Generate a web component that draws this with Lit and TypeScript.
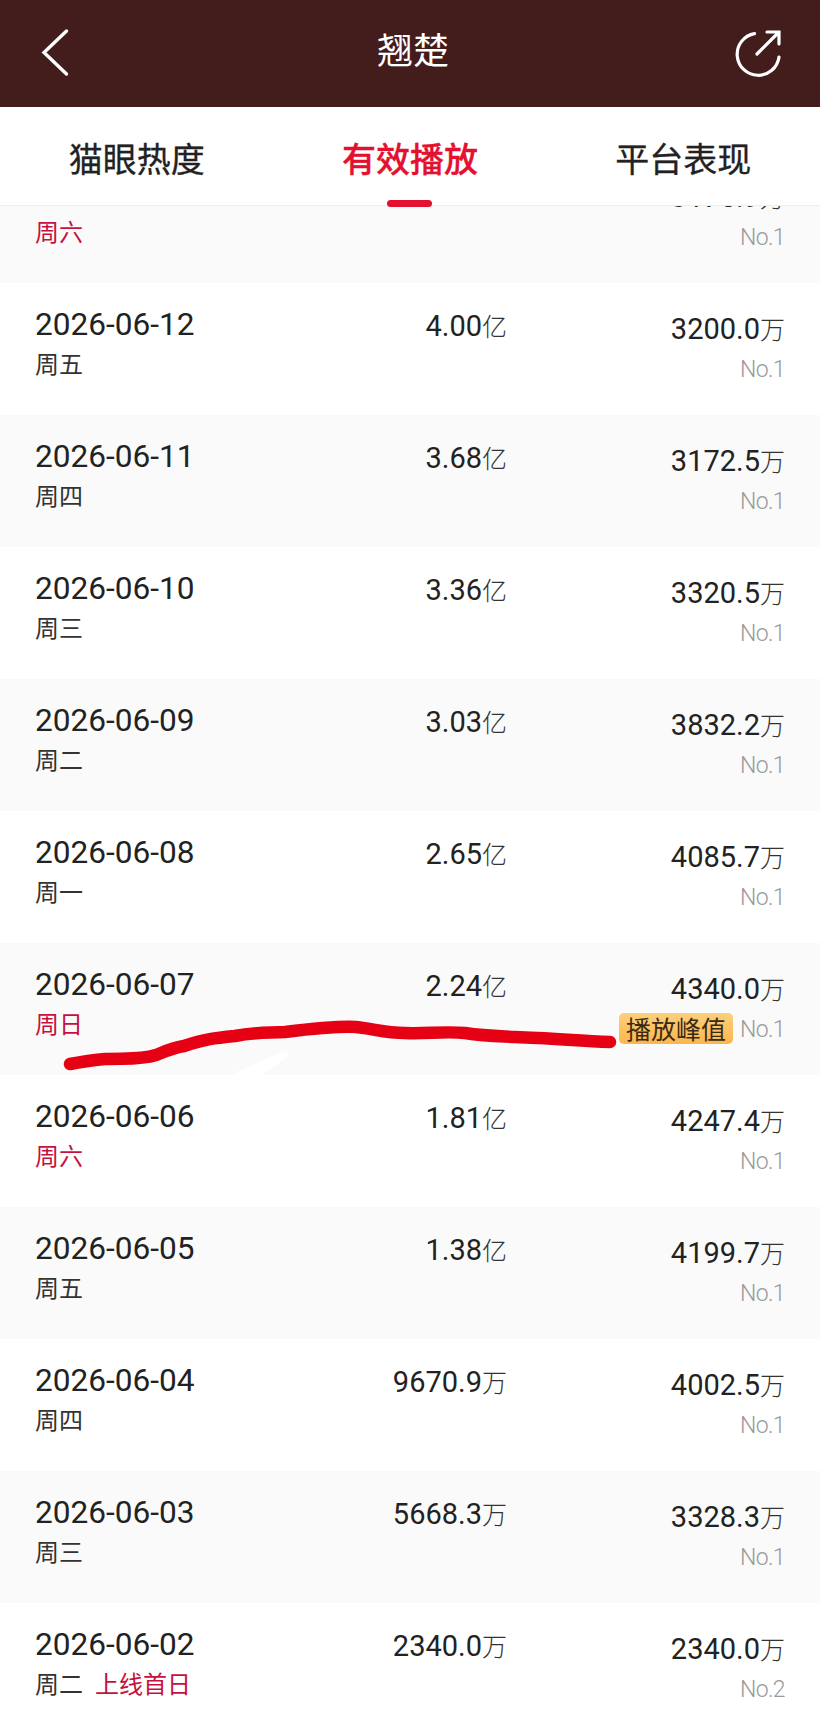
import { LitElement, css, html, nothing } from "lit";
import { customElement } from "lit/decorators.js";
import { classMap } from "lit/directives/class-map.js";

type Row = {
  date: string;
  week: string;
  redWeek?: boolean;
  note?: string;
  total: string;
  totalUnit: string;
  daily: string;
  rank: string;
  peak?: boolean;
};

const rows: Row[] = [
  { date: "2026-06-13", week: "周六", redWeek: true, total: "4.32", totalUnit: "亿", daily: "3175.9", rank: "No.1" },
  { date: "2026-06-12", week: "周五", total: "4.00", totalUnit: "亿", daily: "3200.0", rank: "No.1" },
  { date: "2026-06-11", week: "周四", total: "3.68", totalUnit: "亿", daily: "3172.5", rank: "No.1" },
  { date: "2026-06-10", week: "周三", total: "3.36", totalUnit: "亿", daily: "3320.5", rank: "No.1" },
  { date: "2026-06-09", week: "周二", total: "3.03", totalUnit: "亿", daily: "3832.2", rank: "No.1" },
  { date: "2026-06-08", week: "周一", total: "2.65", totalUnit: "亿", daily: "4085.7", rank: "No.1" },
  { date: "2026-06-07", week: "周日", redWeek: true, total: "2.24", totalUnit: "亿", daily: "4340.0", rank: "No.1", peak: true },
  { date: "2026-06-06", week: "周六", redWeek: true, total: "1.81", totalUnit: "亿", daily: "4247.4", rank: "No.1" },
  { date: "2026-06-05", week: "周五", total: "1.38", totalUnit: "亿", daily: "4199.7", rank: "No.1" },
  { date: "2026-06-04", week: "周四", total: "9670.9", totalUnit: "万", daily: "4002.5", rank: "No.1" },
  { date: "2026-06-03", week: "周三", total: "5668.3", totalUnit: "万", daily: "3328.3", rank: "No.1" },
  { date: "2026-06-02", week: "周二", note: "上线首日", total: "2340.0", totalUnit: "万", daily: "2340.0", rank: "No.2" },
];

@customElement("app-root")
export class AppRoot extends LitElement {
  render() {
    return html`
      <header class="bar">
        <svg class="back" width="40" height="60" viewBox="0 0 40 60">
          <path d="M26.5 10 L4 31.5 L26.5 53" fill="none" stroke="#fff" stroke-width="3.4" stroke-linecap="round" stroke-linejoin="miter" />
        </svg>
        <div class="title">翘楚</div>
        <svg class="share" width="50" height="50" viewBox="0 0 50 50">
          <path d="M21.5 4.6 A21 21 0 1 0 46 28" fill="none" stroke="#fff" stroke-width="3.2" stroke-linecap="round" />
          <path d="M24 25 L45.5 3.5 M34 3 H46 V15" fill="none" stroke="#fff" stroke-width="3.2" stroke-linecap="round" />
        </svg>
      </header>

      <nav class="tabs">
        <div class="tab">猫眼热度</div>
        <div class="tab active">有效播放</div>
        <div class="tab">平台表现</div>
      </nav>

      <main class="list">
        <div class="inner">
          ${rows.map(
            (r, i) => html`
              <div class=${classMap({ row: true, odd: i % 2 === 0 })}>
                <div>
                  <div class="date">${r.date}</div>
                  <div class="week">
                    <span class=${classMap({ red: !!r.redWeek })}>${r.week}</span>
                    ${r.note ? html`<span class="red note">${r.note}</span>` : nothing}
                  </div>
                </div>
                <div class="total">
                  <span class="num">${r.total}</span><span class="unit">${r.totalUnit}</span>
                </div>
                <div class="daily">
                  <div class="daily-top">
                    <span class="num">${r.daily}</span><span class="unit">万</span>
                  </div>
                  <div class="rank-line">
                    ${r.peak ? html`<span class="tag">播放峰值</span>` : nothing}
                    <span class="rank">${r.rank}</span>
                  </div>
                </div>
              </div>
            `
          )}
        </div>
      </main>

      <!-- hand drawn marker over the peak row -->
      <svg class="marker" width="820" height="1722" viewBox="0 0 820 1722">
        <path d="M232 1075 C250 1066 270 1056 287 1051 L288 1056 C280 1062 270 1069 262 1075 Z" fill="#fff" />
        <path
          d="M70 1064 C85 1061 95 1060 105 1059 C125 1058 140 1060 156 1055 C168 1050 172 1048 184 1046 C205 1039 215 1038 235 1036 C255 1032 265 1033 285 1032 C310 1029 335 1026 356 1027 C375 1029 385 1033 405 1033 C425 1034 445 1031 465 1033 C485 1036 495 1036 515 1037 C550 1038 580 1041 610 1042"
          fill="none"
          stroke="#e60014"
          stroke-width="12.5"
          stroke-linecap="round"
          stroke-linejoin="round"
        />
      </svg>
    `;
  }

  static styles = css`
    :host {
      display: block;
      position: relative;
      width: 820px;
      height: 1722px;
      overflow: hidden;
      background: #fff;
      font-family: "Noto Sans CJK SC", "Noto Sans", sans-serif;
      color: #222;
    }

    .bar {
      height: 107px;
      background: #431c1c;
      display: flex;
      align-items: flex-start;
      justify-content: space-between;
      box-sizing: border-box;
      padding: 21px 37px 0 40px;
    }
    .back {
      display: block;
    }
    .share {
      display: block;
      margin-top: 8px;
    }
    .title {
      position: absolute;
      left: 6px;
      right: 0;
      top: 24px;
      text-align: center;
      color: #fff;
      font-size: 36px;
      line-height: 48px;
    }

    .tabs {
      height: 99px;
      box-sizing: border-box;
      display: grid;
      grid-template-columns: repeat(3, 1fr);
      border-bottom: 1px solid #eee;
    }
    .tab {
      position: relative;
      text-align: center;
      padding-top: 29px;
      font-size: 34px;
      line-height: 44px;
      color: #222;
      -webkit-text-stroke: 0.3px #222;
    }
    .tab.active {
      color: #e3112f;
      font-weight: 500;
      -webkit-text-stroke: 0.3px #e3112f;
    }
    .tab.active::after {
      content: "";
      position: absolute;
      left: 50%;
      bottom: -2px;
      width: 45px;
      height: 7px;
      margin-left: -23px;
      border-radius: 4px;
      background: #e3112f;
    }

    .list {
      height: 1516px;
      overflow: hidden;
    }
    .inner {
      margin-top: -55px;
    }
    .row {
      height: 132px;
      box-sizing: border-box;
      padding: 23px 35px 0;
      display: grid;
      grid-template-columns: 1fr 172px 278px;
      background: #fff;
    }
    .row.odd {
      background: #fafafa;
    }
    .row:first-child .total {
      visibility: hidden;
    }

    .date {
      font-family: Roboto, sans-serif;
      font-size: 31.6px;
      line-height: 38px;
      color: #222;
    }
    .week {
      font-size: 24px;
      line-height: 38px;
      color: #333;
      display: flex;
      gap: 12px;
    }
    .red {
      color: #c4123f;
    }

    .num {
      font-family: Roboto, sans-serif;
      font-size: 29px;
      color: #222;
    }
    .unit {
      font-size: 25px;
      color: #333;
      font-weight: 300;
    }
    .total {
      text-align: right;
      line-height: 40px;
      margin-top: -1px;
    }
    .daily {
      text-align: right;
      margin-top: 2px;
    }
    .daily-top {
      line-height: 40px;
    }
    .rank-line {
      display: flex;
      justify-content: flex-end;
      align-items: center;
      gap: 7px;
      height: 34px;
    }
    .rank {
      font-family: Roboto, sans-serif;
      font-weight: 300;
      font-size: 23px;
      letter-spacing: -0.6px;
      color: #999;
    }
    .tag {
      font-size: 25px;
      line-height: 31px;
      padding: 0 7px;
      margin-top: -2px;
      border-radius: 5px;
      background: linear-gradient(#fcd07c, #fbb64c);
      color: #3a2a14;
    }

    .marker {
      position: absolute;
      left: 0;
      top: 0;
      pointer-events: none;
    }
  `;
}

declare global {
  interface HTMLElementTagNameMap {
    "app-root": AppRoot;
  }
}
